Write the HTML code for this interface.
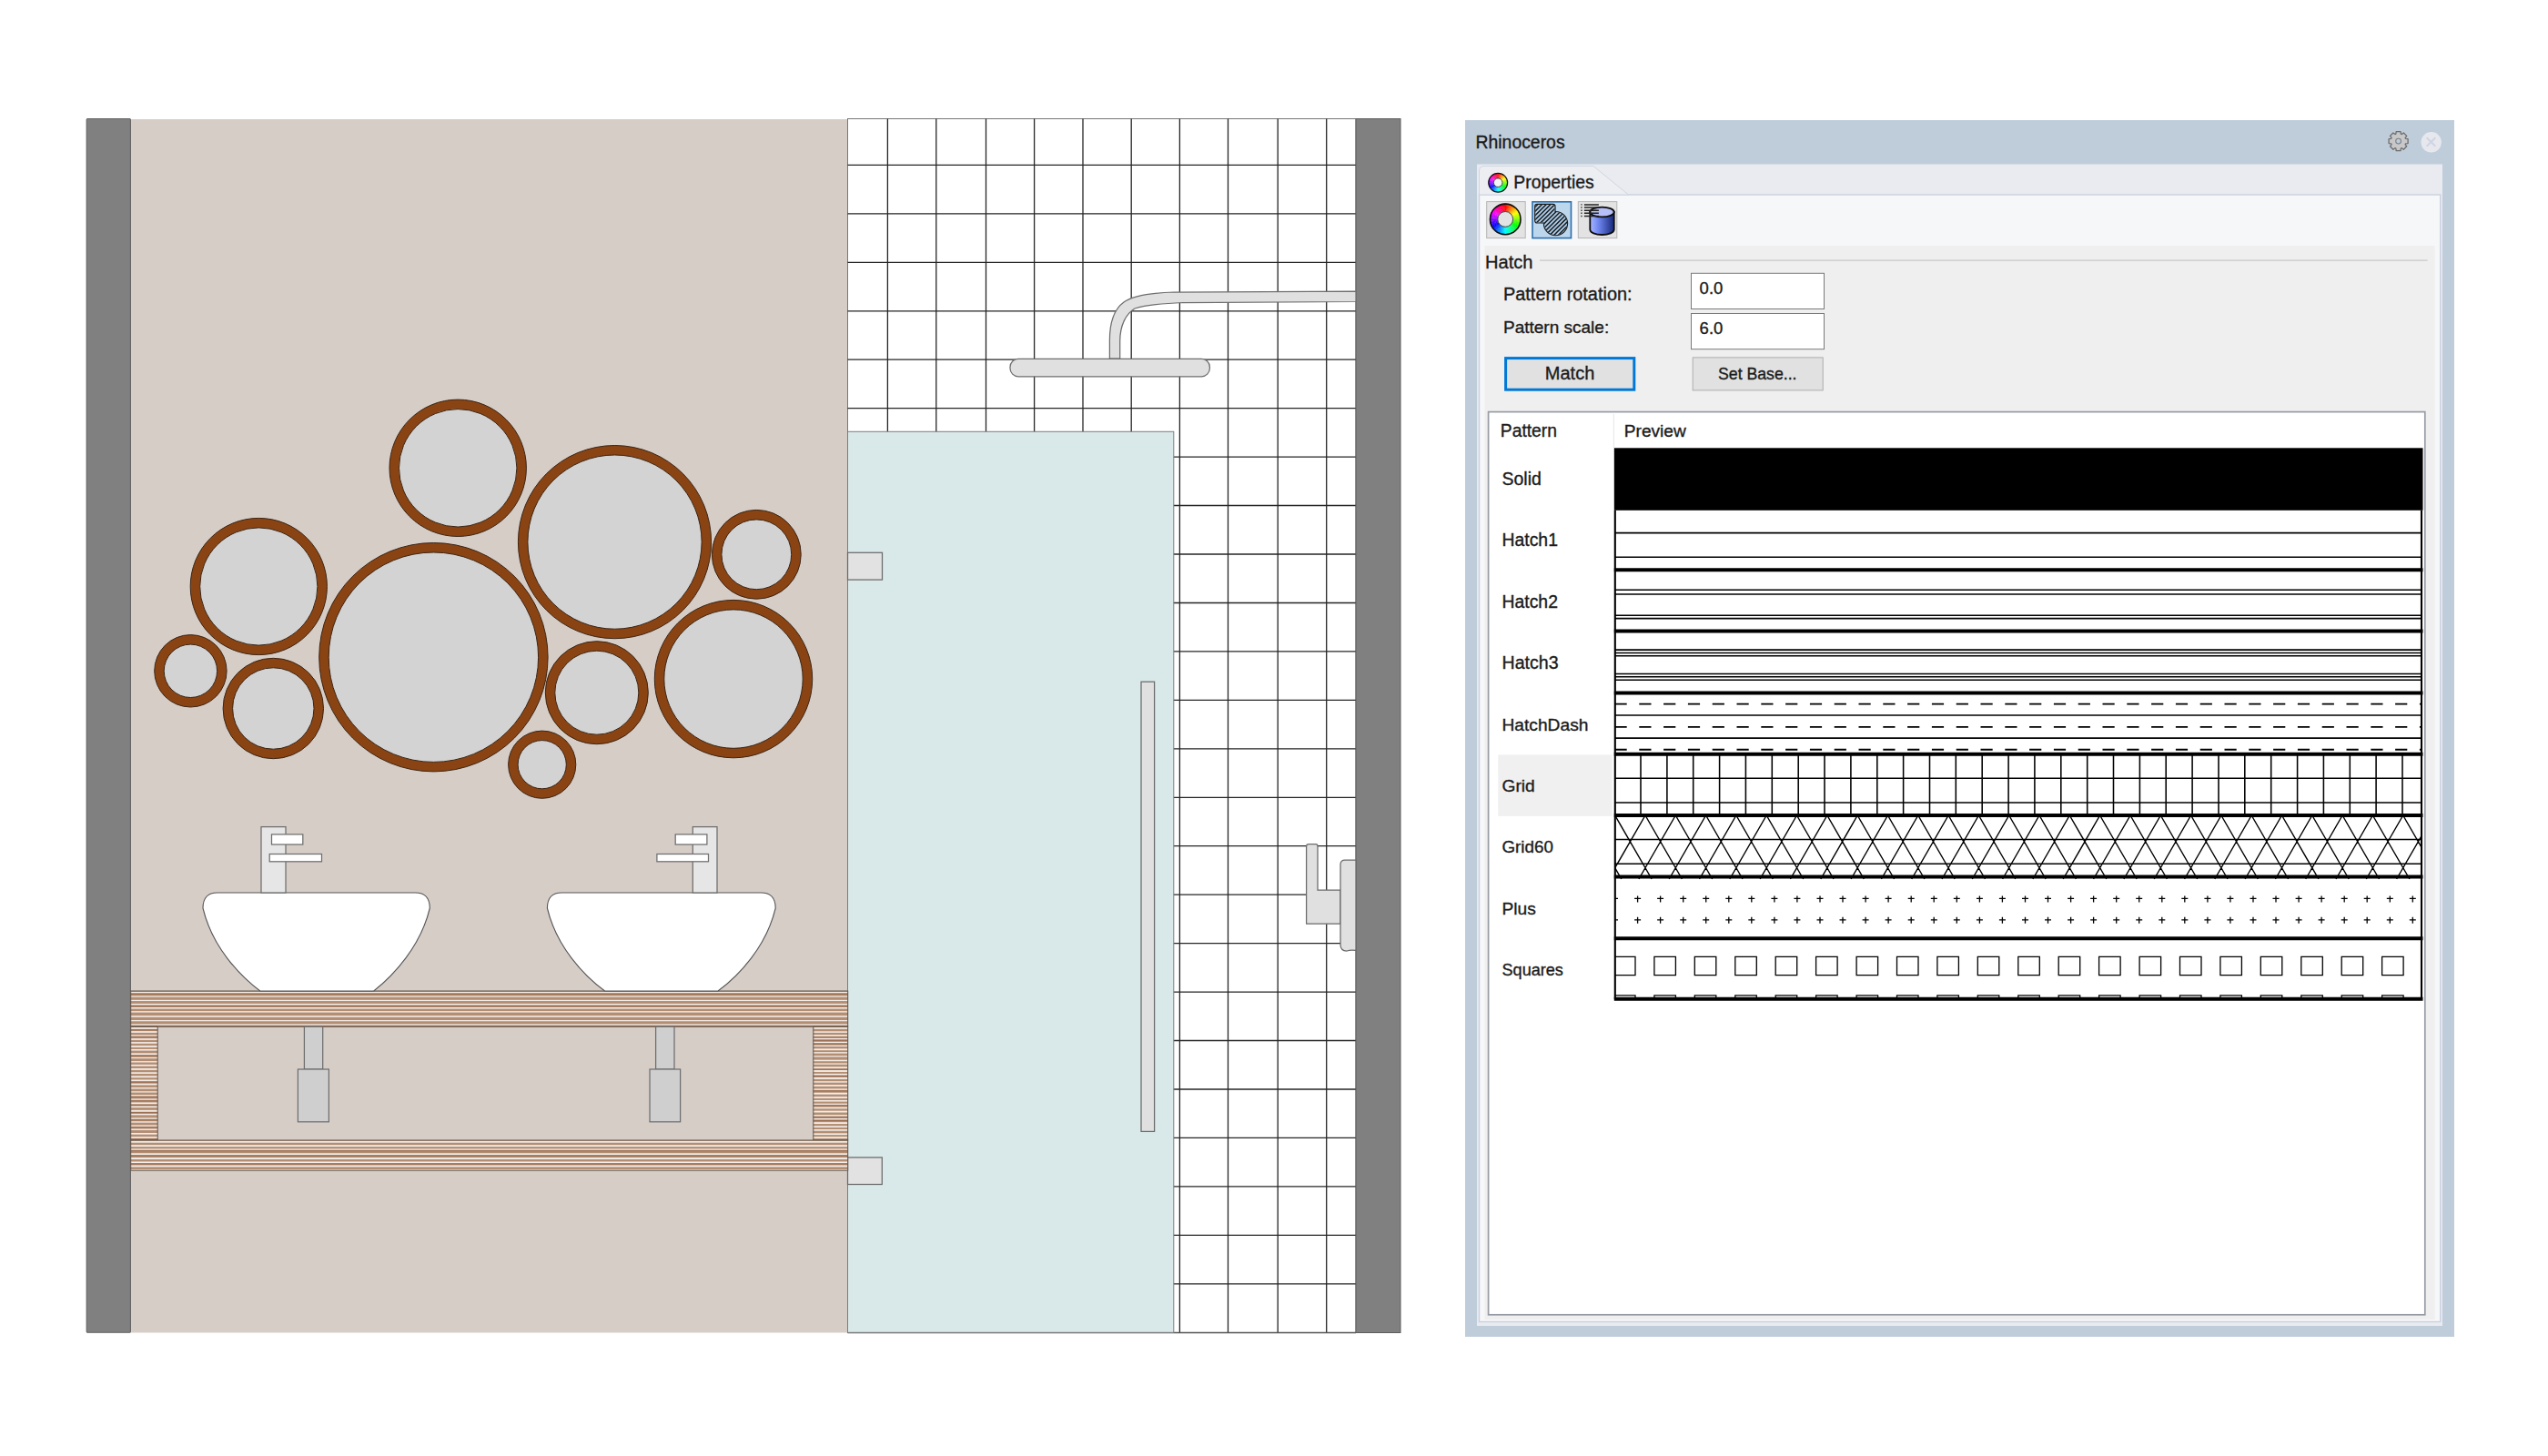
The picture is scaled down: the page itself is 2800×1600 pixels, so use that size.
<!DOCTYPE html><html><head><meta charset="utf-8"><style>html,body{margin:0;padding:0;background:#fff;width:2800px;height:1600px;overflow:hidden}svg{position:absolute;left:0;top:0}text{stroke:#1b1b1b;stroke-width:0.35px}</style></head><body>
<svg width="2800" height="1600" viewBox="0 0 2800 1600">
<defs>
<pattern id="wood" patternUnits="userSpaceOnUse" x="0" y="1089" width="40" height="4.5"><rect width="40" height="4.5" fill="#b08a6e"/><rect y="0.6" width="40" height="1.7" fill="#f1e9e3"/></pattern>
<pattern id="woodv" patternUnits="userSpaceOnUse" x="0" y="1128" width="40" height="4.2"><rect width="40" height="4.2" fill="#b08a6e"/><rect y="0.6" width="40" height="1.6" fill="#f1e9e3"/></pattern>
</defs>
<rect x="143.5" y="131" width="788" height="1333.5" fill="#d6cdc7"/>
<rect x="95.2" y="130.5" width="48.2" height="1333.8" rx="1" fill="#808080" stroke="#626262" stroke-width="1.1"/>
<rect x="931.5" y="130.5" width="558.5" height="1334" fill="#fff" stroke="#777" stroke-width="1"/>
<path d="M975.4 130.5V1464.5M1028.8 130.5V1464.5M1083.5 130.5V1464.5M1136.6 130.5V1464.5M1190 130.5V1464.5M1243.2 130.5V1464.5M1296.4 130.5V1464.5M1349.5 130.5V1464.5M1404.2 130.5V1464.5M1457.7 130.5V1464.5M931.5 181.4H1490M931.5 234.9H1490M931.5 288.3H1490M931.5 341.8H1490M931.5 395.2H1490M931.5 448.6H1490M931.5 502.1H1490M931.5 555.5H1490M931.5 609.0H1490M931.5 662.5H1490M931.5 715.9H1490M931.5 769.4H1490M931.5 822.8H1490M931.5 876.3H1490M931.5 929.7H1490M931.5 983.2H1490M931.5 1036.6H1490M931.5 1090.1H1490M931.5 1143.5H1490M931.5 1197.0H1490M931.5 1250.4H1490M931.5 1303.9H1490M931.5 1357.3H1490M931.5 1410.8H1490" stroke="#262626" stroke-width="1.3" fill="none"/>
<path d="M931.5 1464.5H1490" stroke="#555" stroke-width="1.3"/>
<rect x="1490" y="130.5" width="49" height="1334" fill="#808080" stroke="#5e5e5e" stroke-width="1"/>
<path d="M1219.4 394 L1219.4 374 C1219.4 355 1224 340 1235 332 C1245 325 1262 322 1290 321 L1490 320.2 L1490 331.5 L1300 332.5 C1275 333.5 1256 336 1247 339 C1237 345 1230.7 358 1230.7 375 L1230.7 394 Z" fill="#e0e0e0" stroke="#6e6e6e" stroke-width="1.25"/>
<rect x="1110" y="394.4" width="219.4" height="19.4" rx="9" fill="#e0e0e0" stroke="#6e6e6e" stroke-width="1.25"/>
<rect x="931.5" y="474.3" width="358.3" height="990" fill="#d9e8e8" stroke="#7c7c7c" stroke-width="1"/>
<rect x="931.5" y="607.3" width="38" height="29.8" fill="#e2e2e2" stroke="#6a6a6a" stroke-width="1.25"/>
<rect x="931.5" y="1271.9" width="37.8" height="29.6" fill="#e2e2e2" stroke="#6a6a6a" stroke-width="1.25"/>
<rect x="1254" y="749.2" width="14.6" height="494.2" fill="#e0e0e0" stroke="#6a6a6a" stroke-width="1.25"/>
<path d="M1435.6 1015.2 L1435.6 930 Q1435.6 927.7 1438 927.7 L1446 927.7 Q1448 927.7 1448 930 L1448 978 L1473 978 L1473 1015.2 Z" fill="#e0e0e0" stroke="#6a6a6a" stroke-width="1.25"/>
<path d="M1490 945 L1478 945 Q1473 945 1473 950 L1473 1038 Q1473 1045 1480 1045 Q1484 1043.5 1490 1044.4 Z" fill="#e0e0e0" stroke="#6a6a6a" stroke-width="1.25"/>
<rect x="143.7" y="1089" width="788" height="39.2" fill="#b38e73"/><rect x="143.7" y="1089.80" width="788" height="1.43" fill="#f4ede8"/><rect x="143.7" y="1091.83" width="788" height="0.9" fill="#946446"/><rect x="143.7" y="1094.44" width="788" height="1.25" fill="#f4ede8"/><rect x="143.7" y="1098.81" width="788" height="1.24" fill="#f4ede8"/><rect x="143.7" y="1102.90" width="788" height="1.50" fill="#f4ede8"/><rect x="143.7" y="1105.00" width="788" height="0.9" fill="#946446"/><rect x="143.7" y="1107.03" width="788" height="1.50" fill="#f4ede8"/><rect x="143.7" y="1111.19" width="788" height="1.36" fill="#f4ede8"/><rect x="143.7" y="1116.09" width="788" height="1.60" fill="#f4ede8"/><rect x="143.7" y="1121.02" width="788" height="1.23" fill="#f4ede8"/><rect x="143.7" y="1125.33" width="788" height="1.30" fill="#f4ede8"/><rect x="143.7" y="1127.23" width="788" height="0.9" fill="#946446"/><rect x="143.7" y="1089" width="788" height="39.2" fill="none" stroke="#5f544b" stroke-width="1"/>
<rect x="143.7" y="1128.2" width="29.5" height="124.8" fill="#b38e73"/><rect x="143.7" y="1129.00" width="29.5" height="1.77" fill="#f4ede8"/><rect x="143.7" y="1131.37" width="29.5" height="0.9" fill="#946446"/><rect x="143.7" y="1133.17" width="29.5" height="1.65" fill="#f4ede8"/><rect x="143.7" y="1137.31" width="29.5" height="1.24" fill="#f4ede8"/><rect x="143.7" y="1139.15" width="29.5" height="0.9" fill="#946446"/><rect x="143.7" y="1141.16" width="29.5" height="1.68" fill="#f4ede8"/><rect x="143.7" y="1145.11" width="29.5" height="1.61" fill="#f4ede8"/><rect x="143.7" y="1149.05" width="29.5" height="1.76" fill="#f4ede8"/><rect x="143.7" y="1152.94" width="29.5" height="1.60" fill="#f4ede8"/><rect x="143.7" y="1157.35" width="29.5" height="1.71" fill="#f4ede8"/><rect x="143.7" y="1159.66" width="29.5" height="0.9" fill="#946446"/><rect x="143.7" y="1161.84" width="29.5" height="1.28" fill="#f4ede8"/><rect x="143.7" y="1166.15" width="29.5" height="1.31" fill="#f4ede8"/><rect x="143.7" y="1169.87" width="29.5" height="1.67" fill="#f4ede8"/><rect x="143.7" y="1174.03" width="29.5" height="1.81" fill="#f4ede8"/><rect x="143.7" y="1178.29" width="29.5" height="1.62" fill="#f4ede8"/><rect x="143.7" y="1182.36" width="29.5" height="1.79" fill="#f4ede8"/><rect x="143.7" y="1186.44" width="29.5" height="1.66" fill="#f4ede8"/><rect x="143.7" y="1188.70" width="29.5" height="0.9" fill="#946446"/><rect x="143.7" y="1190.70" width="29.5" height="1.65" fill="#f4ede8"/><rect x="143.7" y="1195.06" width="29.5" height="1.40" fill="#f4ede8"/><rect x="143.7" y="1199.30" width="29.5" height="1.22" fill="#f4ede8"/><rect x="143.7" y="1203.13" width="29.5" height="1.28" fill="#f4ede8"/><rect x="143.7" y="1205.01" width="29.5" height="0.9" fill="#946446"/><rect x="143.7" y="1207.45" width="29.5" height="1.29" fill="#f4ede8"/><rect x="143.7" y="1209.34" width="29.5" height="0.9" fill="#946446"/><rect x="143.7" y="1211.46" width="29.5" height="1.81" fill="#f4ede8"/><rect x="143.7" y="1213.87" width="29.5" height="0.9" fill="#946446"/><rect x="143.7" y="1215.52" width="29.5" height="1.58" fill="#f4ede8"/><rect x="143.7" y="1219.88" width="29.5" height="1.80" fill="#f4ede8"/><rect x="143.7" y="1222.29" width="29.5" height="0.9" fill="#946446"/><rect x="143.7" y="1223.91" width="29.5" height="1.45" fill="#f4ede8"/><rect x="143.7" y="1228.39" width="29.5" height="1.31" fill="#f4ede8"/><rect x="143.7" y="1230.29" width="29.5" height="0.9" fill="#946446"/><rect x="143.7" y="1232.27" width="29.5" height="1.36" fill="#f4ede8"/><rect x="143.7" y="1236.44" width="29.5" height="1.38" fill="#f4ede8"/><rect x="143.7" y="1238.42" width="29.5" height="0.9" fill="#946446"/><rect x="143.7" y="1240.47" width="29.5" height="1.46" fill="#f4ede8"/><rect x="143.7" y="1244.95" width="29.5" height="1.68" fill="#f4ede8"/><rect x="143.7" y="1249.14" width="29.5" height="1.67" fill="#f4ede8"/><rect x="143.7" y="1251.42" width="29.5" height="0.9" fill="#946446"/><rect x="143.7" y="1128.2" width="29.5" height="124.8" fill="none" stroke="#5f544b" stroke-width="1"/>
<rect x="893.8" y="1128.2" width="37.9" height="124.8" fill="#b38e73"/><rect x="893.8" y="1129.00" width="37.9" height="1.75" fill="#f4ede8"/><rect x="893.8" y="1133.34" width="37.9" height="1.47" fill="#f4ede8"/><rect x="893.8" y="1137.12" width="37.9" height="1.64" fill="#f4ede8"/><rect x="893.8" y="1139.36" width="37.9" height="0.9" fill="#946446"/><rect x="893.8" y="1140.86" width="37.9" height="1.35" fill="#f4ede8"/><rect x="893.8" y="1142.81" width="37.9" height="0.9" fill="#946446"/><rect x="893.8" y="1144.83" width="37.9" height="1.24" fill="#f4ede8"/><rect x="893.8" y="1146.67" width="37.9" height="0.9" fill="#946446"/><rect x="893.8" y="1148.65" width="37.9" height="1.27" fill="#f4ede8"/><rect x="893.8" y="1152.36" width="37.9" height="1.81" fill="#f4ede8"/><rect x="893.8" y="1156.17" width="37.9" height="1.38" fill="#f4ede8"/><rect x="893.8" y="1160.16" width="37.9" height="1.29" fill="#f4ede8"/><rect x="893.8" y="1164.66" width="37.9" height="1.53" fill="#f4ede8"/><rect x="893.8" y="1168.42" width="37.9" height="1.27" fill="#f4ede8"/><rect x="893.8" y="1172.33" width="37.9" height="1.78" fill="#f4ede8"/><rect x="893.8" y="1174.71" width="37.9" height="0.9" fill="#946446"/><rect x="893.8" y="1176.04" width="37.9" height="1.87" fill="#f4ede8"/><rect x="893.8" y="1179.85" width="37.9" height="1.58" fill="#f4ede8"/><rect x="893.8" y="1182.03" width="37.9" height="0.9" fill="#946446"/><rect x="893.8" y="1183.97" width="37.9" height="1.88" fill="#f4ede8"/><rect x="893.8" y="1188.23" width="37.9" height="1.38" fill="#f4ede8"/><rect x="893.8" y="1192.06" width="37.9" height="1.74" fill="#f4ede8"/><rect x="893.8" y="1196.39" width="37.9" height="1.43" fill="#f4ede8"/><rect x="893.8" y="1198.42" width="37.9" height="0.9" fill="#946446"/><rect x="893.8" y="1200.74" width="37.9" height="1.89" fill="#f4ede8"/><rect x="893.8" y="1205.10" width="37.9" height="1.77" fill="#f4ede8"/><rect x="893.8" y="1208.97" width="37.9" height="1.56" fill="#f4ede8"/><rect x="893.8" y="1212.69" width="37.9" height="1.22" fill="#f4ede8"/><rect x="893.8" y="1214.51" width="37.9" height="0.9" fill="#946446"/><rect x="893.8" y="1216.59" width="37.9" height="1.68" fill="#f4ede8"/><rect x="893.8" y="1220.64" width="37.9" height="1.86" fill="#f4ede8"/><rect x="893.8" y="1225.12" width="37.9" height="1.46" fill="#f4ede8"/><rect x="893.8" y="1227.17" width="37.9" height="0.9" fill="#946446"/><rect x="893.8" y="1228.99" width="37.9" height="1.34" fill="#f4ede8"/><rect x="893.8" y="1230.93" width="37.9" height="0.9" fill="#946446"/><rect x="893.8" y="1233.20" width="37.9" height="1.83" fill="#f4ede8"/><rect x="893.8" y="1237.28" width="37.9" height="1.66" fill="#f4ede8"/><rect x="893.8" y="1241.04" width="37.9" height="1.66" fill="#f4ede8"/><rect x="893.8" y="1245.37" width="37.9" height="1.73" fill="#f4ede8"/><rect x="893.8" y="1249.21" width="37.9" height="1.75" fill="#f4ede8"/><rect x="893.8" y="1128.2" width="37.9" height="124.8" fill="none" stroke="#5f544b" stroke-width="1"/>
<rect x="143.7" y="1253" width="788" height="33.2" fill="#b38e73"/><rect x="143.7" y="1253.80" width="788" height="1.88" fill="#f4ede8"/><rect x="143.7" y="1258.21" width="788" height="1.86" fill="#f4ede8"/><rect x="143.7" y="1262.41" width="788" height="1.29" fill="#f4ede8"/><rect x="143.7" y="1264.30" width="788" height="0.9" fill="#946446"/><rect x="143.7" y="1267.28" width="788" height="1.76" fill="#f4ede8"/><rect x="143.7" y="1269.64" width="788" height="0.9" fill="#946446"/><rect x="143.7" y="1272.07" width="788" height="1.89" fill="#f4ede8"/><rect x="143.7" y="1276.44" width="788" height="1.58" fill="#f4ede8"/><rect x="143.7" y="1278.62" width="788" height="0.9" fill="#946446"/><rect x="143.7" y="1280.50" width="788" height="1.88" fill="#f4ede8"/><rect x="143.7" y="1285.02" width="788" height="1.18" fill="#f4ede8"/><rect x="143.7" y="1253" width="788" height="33.2" fill="none" stroke="#5f544b" stroke-width="1"/>
<path d="M239 981 L456.3 981 Q472.3 981 472.3 998 C462.3 1040 432.3 1072 410.7 1089 L285.8 1089 C263 1072 233 1040 223 998 Q223 981 239 981 Z" fill="#fff" stroke="#555" stroke-width="1.1"/>
<path d="M617.4 981 L836.2 981 Q852.2 981 852.2 998 C842.2 1040 812.2 1072 789 1089 L664.6 1089 C641.4 1072 611.4 1040 601.4 998 Q601.4 981 617.4 981 Z" fill="#fff" stroke="#555" stroke-width="1.1"/>
<rect x="287" y="908.6" width="27" height="72.4" fill="#e6e6e6" stroke="#6e6e6e" stroke-width="1.25"/><rect x="298.5" y="916.9" width="34.30000000000001" height="11.1" fill="#ffffff" stroke="#6e6e6e" stroke-width="1.25"/><rect x="296.2" y="938.5" width="57.30000000000001" height="8.3" fill="#ffffff" stroke="#6e6e6e" stroke-width="1.25"/>
<rect x="761.3" y="908.6" width="26.700000000000045" height="72.4" fill="#e6e6e6" stroke="#6e6e6e" stroke-width="1.25"/><rect x="742.2" y="916.9" width="34.69999999999993" height="11.1" fill="#ffffff" stroke="#6e6e6e" stroke-width="1.25"/><rect x="721.9" y="938.5" width="56.60000000000002" height="8.3" fill="#ffffff" stroke="#6e6e6e" stroke-width="1.25"/>
<rect x="334.4" y="1128.2" width="20.30000000000001" height="46.8" fill="#cfcfcf" stroke="#6e6e6e" stroke-width="1.25"/><rect x="327.4" y="1175" width="34.0" height="57.8" fill="#cfcfcf" stroke="#6e6e6e" stroke-width="1.25"/>
<rect x="720.6" y="1128.2" width="20.399999999999977" height="46.8" fill="#cfcfcf" stroke="#6e6e6e" stroke-width="1.25"/><rect x="714" y="1175" width="33.60000000000002" height="57.8" fill="#cfcfcf" stroke="#6e6e6e" stroke-width="1.25"/>
<circle cx="503.2" cy="514.3" r="75.2" fill="#8a4413" stroke="#3a2414" stroke-width="1"/>
<circle cx="503.2" cy="514.3" r="64.7" fill="#d3d3d3" stroke="#3a2414" stroke-width="1"/>
<circle cx="675.5" cy="595.6" r="106.1" fill="#8a4413" stroke="#3a2414" stroke-width="1"/>
<circle cx="675.5" cy="595.6" r="95.6" fill="#d3d3d3" stroke="#3a2414" stroke-width="1"/>
<circle cx="831.3" cy="609.3" r="48.9" fill="#8a4413" stroke="#3a2414" stroke-width="1"/>
<circle cx="831.3" cy="609.3" r="38.4" fill="#d3d3d3" stroke="#3a2414" stroke-width="1"/>
<circle cx="284.3" cy="644.5" r="75.1" fill="#8a4413" stroke="#3a2414" stroke-width="1"/>
<circle cx="284.3" cy="644.5" r="64.6" fill="#d3d3d3" stroke="#3a2414" stroke-width="1"/>
<circle cx="476.4" cy="722.2" r="125.7" fill="#8a4413" stroke="#3a2414" stroke-width="1"/>
<circle cx="476.4" cy="722.2" r="115.2" fill="#d3d3d3" stroke="#3a2414" stroke-width="1"/>
<circle cx="209.4" cy="737.3" r="39.7" fill="#8a4413" stroke="#3a2414" stroke-width="1"/>
<circle cx="209.4" cy="737.3" r="29.200000000000003" fill="#d3d3d3" stroke="#3a2414" stroke-width="1"/>
<circle cx="300.3" cy="778.5" r="55.2" fill="#8a4413" stroke="#3a2414" stroke-width="1"/>
<circle cx="300.3" cy="778.5" r="44.7" fill="#d3d3d3" stroke="#3a2414" stroke-width="1"/>
<circle cx="655.8" cy="761.2" r="56.5" fill="#8a4413" stroke="#3a2414" stroke-width="1"/>
<circle cx="655.8" cy="761.2" r="46" fill="#d3d3d3" stroke="#3a2414" stroke-width="1"/>
<circle cx="806" cy="746.1" r="86.7" fill="#8a4413" stroke="#3a2414" stroke-width="1"/>
<circle cx="806" cy="746.1" r="76.2" fill="#d3d3d3" stroke="#3a2414" stroke-width="1"/>
<circle cx="595.7" cy="840.2" r="37.1" fill="#8a4413" stroke="#3a2414" stroke-width="1"/>
<circle cx="595.7" cy="840.2" r="26.6" fill="#d3d3d3" stroke="#3a2414" stroke-width="1"/>
<rect x="1610" y="132" width="1087" height="1337" fill="#bfcddb"/>
<text x="1621.5" y="162.6" font-family='"Liberation Sans", sans-serif' font-size="19.4" fill="#1b1b1b">Rhinoceros</text>
<g transform="translate(2635.6 155.1)">
<path d="M-2.73 -7.94 L-2.43 -10.52 L2.43 -10.52 L2.73 -7.94 L3.68 -7.55 L5.72 -9.16 L9.16 -5.72 L7.55 -3.68 L7.94 -2.73 L10.52 -2.43 L10.52 2.43 L7.94 2.73 L7.55 3.68 L9.16 5.72 L5.72 9.16 L3.68 7.55 L2.73 7.94 L2.43 10.52 L-2.43 10.52 L-2.73 7.94 L-3.68 7.55 L-5.72 9.16 L-9.16 5.72 L-7.55 3.68 L-7.94 2.73 L-10.52 2.43 L-10.52 -2.43 L-7.94 -2.73 L-7.55 -3.68 L-9.16 -5.72 L-5.72 -9.16 L-3.68 -7.55 Z" fill="#c8c8c8" stroke="#6e6e6e" stroke-width="1.3" stroke-linejoin="round"/>
<circle r="2.9" fill="#bfcddb" stroke="#7a8088" stroke-width="1.1"/>
</g>
<circle cx="2671.7" cy="156.3" r="11.2" fill="#e6e8ee"/>
<path d="M2666.7 151.2 L2676.3 160.8 M2676.3 151.2 L2666.7 160.8" stroke="#d0d3e3" stroke-width="2"/>
<rect x="1623" y="180.5" width="1061" height="1276.5" fill="#e9ebf0"/>
<rect x="1625.5" y="214" width="1056.2" height="1238.5" fill="#f6f7f9" stroke="#c9d0df" stroke-width="1.4"/>
<path d="M1625.5 214 L1625.5 188 Q1625.5 182.5 1631 182.5 L1751 182.5 L1789.5 214 Z" fill="#eceef2" stroke="#cfd5e2" stroke-width="1"/>
<rect x="1631.5" y="270" width="1044.3" height="1180" fill="#efefef"/>
<defs><radialGradient id="rg"/></defs>
<path d="M1646.09 190.20A10.5 10.5 0 0 1 1647.04 190.23L1646.58 195.92A4.8 4.8 0 0 0 1646.15 195.90Z" fill="#ff0800"/><path d="M1646.82 190.22A10.5 10.5 0 0 1 1647.77 190.32L1646.92 195.95A4.8 4.8 0 0 0 1646.48 195.91Z" fill="#ff1900"/><path d="M1647.55 190.29A10.5 10.5 0 0 1 1648.49 190.45L1647.25 196.02A4.8 4.8 0 0 0 1646.82 195.94Z" fill="#ff2a00"/><path d="M1648.28 190.41A10.5 10.5 0 0 1 1649.20 190.64L1647.57 196.10A4.8 4.8 0 0 0 1647.15 195.99Z" fill="#ff3b00"/><path d="M1648.99 190.58A10.5 10.5 0 0 1 1649.89 190.87L1647.89 196.21A4.8 4.8 0 0 0 1647.47 196.07Z" fill="#ff4c00"/><path d="M1649.69 190.80A10.5 10.5 0 0 1 1650.57 191.15L1648.20 196.34A4.8 4.8 0 0 0 1647.79 196.17Z" fill="#ff5d00"/><path d="M1650.37 191.06A10.5 10.5 0 0 1 1651.23 191.48L1648.50 196.49A4.8 4.8 0 0 0 1648.11 196.29Z" fill="#ff6e00"/><path d="M1651.03 191.38A10.5 10.5 0 0 1 1651.86 191.85L1648.79 196.66A4.8 4.8 0 0 0 1648.41 196.44Z" fill="#ff7f00"/><path d="M1651.67 191.74A10.5 10.5 0 0 1 1652.46 192.27L1649.06 196.85A4.8 4.8 0 0 0 1648.70 196.60Z" fill="#ff9000"/><path d="M1652.28 192.14A10.5 10.5 0 0 1 1653.03 192.73L1649.32 197.06A4.8 4.8 0 0 0 1648.98 196.79Z" fill="#ffa100"/><path d="M1652.86 192.59A10.5 10.5 0 0 1 1653.57 193.22L1649.57 197.28A4.8 4.8 0 0 0 1649.25 196.99Z" fill="#ffb200"/><path d="M1653.41 193.07A10.5 10.5 0 0 1 1654.08 193.76L1649.80 197.53A4.8 4.8 0 0 0 1649.50 197.21Z" fill="#ffc300"/><path d="M1653.93 193.59A10.5 10.5 0 0 1 1654.54 194.32L1650.01 197.78A4.8 4.8 0 0 0 1649.73 197.45Z" fill="#ffd400"/><path d="M1654.41 194.15A10.5 10.5 0 0 1 1654.97 194.92L1650.21 198.06A4.8 4.8 0 0 0 1649.95 197.71Z" fill="#ffe500"/><path d="M1654.84 194.74A10.5 10.5 0 0 1 1655.35 195.55L1650.38 198.34A4.8 4.8 0 0 0 1650.15 197.97Z" fill="#fff600"/><path d="M1655.24 195.36A10.5 10.5 0 0 1 1655.69 196.20L1650.54 198.64A4.8 4.8 0 0 0 1650.33 198.26Z" fill="#f6ff00"/><path d="M1655.59 196.00A10.5 10.5 0 0 1 1655.98 196.87L1650.67 198.95A4.8 4.8 0 0 0 1650.49 198.55Z" fill="#e5ff00"/><path d="M1655.89 196.66A10.5 10.5 0 0 1 1656.22 197.56L1650.78 199.26A4.8 4.8 0 0 0 1650.63 198.86Z" fill="#d4ff00"/><path d="M1656.15 197.35A10.5 10.5 0 0 1 1656.41 198.27L1650.87 199.59A4.8 4.8 0 0 0 1650.75 199.17Z" fill="#c3ff00"/><path d="M1656.36 198.05A10.5 10.5 0 0 1 1656.56 198.99L1650.94 199.92A4.8 4.8 0 0 0 1650.85 199.49Z" fill="#b2ff00"/><path d="M1656.52 198.77A10.5 10.5 0 0 1 1656.65 199.71L1650.98 200.25A4.8 4.8 0 0 0 1650.92 199.82Z" fill="#a1ff00"/><path d="M1656.63 199.49A10.5 10.5 0 0 1 1656.70 200.44L1651.00 200.58A4.8 4.8 0 0 0 1650.97 200.15Z" fill="#90ff00"/><path d="M1656.69 200.22A10.5 10.5 0 0 1 1656.69 201.18L1651.00 200.92A4.8 4.8 0 0 0 1651.00 200.48Z" fill="#7fff00"/><path d="M1656.70 200.96A10.5 10.5 0 0 1 1656.63 201.91L1650.97 201.25A4.8 4.8 0 0 0 1651.00 200.82Z" fill="#6eff00"/><path d="M1656.65 201.69A10.5 10.5 0 0 1 1656.52 202.63L1650.92 201.58A4.8 4.8 0 0 0 1650.98 201.15Z" fill="#5dff00"/><path d="M1656.56 202.41A10.5 10.5 0 0 1 1656.36 203.35L1650.85 201.91A4.8 4.8 0 0 0 1650.94 201.48Z" fill="#4cff00"/><path d="M1656.41 203.13A10.5 10.5 0 0 1 1656.15 204.05L1650.75 202.23A4.8 4.8 0 0 0 1650.87 201.81Z" fill="#3bff00"/><path d="M1656.22 203.84A10.5 10.5 0 0 1 1655.89 204.74L1650.63 202.54A4.8 4.8 0 0 0 1650.78 202.14Z" fill="#2aff00"/><path d="M1655.98 204.53A10.5 10.5 0 0 1 1655.59 205.40L1650.49 202.85A4.8 4.8 0 0 0 1650.67 202.45Z" fill="#19ff00"/><path d="M1655.69 205.20A10.5 10.5 0 0 1 1655.24 206.04L1650.33 203.14A4.8 4.8 0 0 0 1650.54 202.76Z" fill="#08ff00"/><path d="M1655.35 205.85A10.5 10.5 0 0 1 1654.84 206.66L1650.15 203.43A4.8 4.8 0 0 0 1650.38 203.06Z" fill="#00ff08"/><path d="M1654.97 206.48A10.5 10.5 0 0 1 1654.41 207.25L1649.95 203.69A4.8 4.8 0 0 0 1650.21 203.34Z" fill="#00ff19"/><path d="M1654.54 207.08A10.5 10.5 0 0 1 1653.93 207.81L1649.73 203.95A4.8 4.8 0 0 0 1650.01 203.62Z" fill="#00ff2a"/><path d="M1654.08 207.64A10.5 10.5 0 0 1 1653.41 208.33L1649.50 204.19A4.8 4.8 0 0 0 1649.80 203.87Z" fill="#00ff3b"/><path d="M1653.57 208.18A10.5 10.5 0 0 1 1652.86 208.81L1649.25 204.41A4.8 4.8 0 0 0 1649.57 204.12Z" fill="#00ff4c"/><path d="M1653.03 208.67A10.5 10.5 0 0 1 1652.28 209.26L1648.98 204.61A4.8 4.8 0 0 0 1649.32 204.34Z" fill="#00ff5d"/><path d="M1652.46 209.13A10.5 10.5 0 0 1 1651.67 209.66L1648.70 204.80A4.8 4.8 0 0 0 1649.06 204.55Z" fill="#00ff6e"/><path d="M1651.86 209.55A10.5 10.5 0 0 1 1651.03 210.02L1648.41 204.96A4.8 4.8 0 0 0 1648.79 204.74Z" fill="#00ff7f"/><path d="M1651.23 209.92A10.5 10.5 0 0 1 1650.37 210.34L1648.11 205.11A4.8 4.8 0 0 0 1648.50 204.91Z" fill="#00ff90"/><path d="M1650.57 210.25A10.5 10.5 0 0 1 1649.69 210.60L1647.79 205.23A4.8 4.8 0 0 0 1648.20 205.06Z" fill="#00ffa1"/><path d="M1649.89 210.53A10.5 10.5 0 0 1 1648.99 210.82L1647.47 205.33A4.8 4.8 0 0 0 1647.89 205.19Z" fill="#00ffb2"/><path d="M1649.20 210.76A10.5 10.5 0 0 1 1648.28 210.99L1647.15 205.41A4.8 4.8 0 0 0 1647.57 205.30Z" fill="#00ffc3"/><path d="M1648.49 210.95A10.5 10.5 0 0 1 1647.55 211.11L1646.82 205.46A4.8 4.8 0 0 0 1647.25 205.38Z" fill="#00ffd4"/><path d="M1647.77 211.08A10.5 10.5 0 0 1 1646.82 211.18L1646.48 205.49A4.8 4.8 0 0 0 1646.92 205.45Z" fill="#00ffe5"/><path d="M1647.04 211.17A10.5 10.5 0 0 1 1646.09 211.20L1646.15 205.50A4.8 4.8 0 0 0 1646.58 205.48Z" fill="#00fff6"/><path d="M1646.31 211.20A10.5 10.5 0 0 1 1645.36 211.17L1645.82 205.48A4.8 4.8 0 0 0 1646.25 205.50Z" fill="#00f6ff"/><path d="M1645.58 211.18A10.5 10.5 0 0 1 1644.63 211.08L1645.48 205.45A4.8 4.8 0 0 0 1645.92 205.49Z" fill="#00e5ff"/><path d="M1644.85 211.11A10.5 10.5 0 0 1 1643.91 210.95L1645.15 205.38A4.8 4.8 0 0 0 1645.58 205.46Z" fill="#00d4ff"/><path d="M1644.12 210.99A10.5 10.5 0 0 1 1643.20 210.76L1644.83 205.30A4.8 4.8 0 0 0 1645.25 205.41Z" fill="#00c3ff"/><path d="M1643.41 210.82A10.5 10.5 0 0 1 1642.51 210.53L1644.51 205.19A4.8 4.8 0 0 0 1644.93 205.33Z" fill="#00b2ff"/><path d="M1642.71 210.60A10.5 10.5 0 0 1 1641.83 210.25L1644.20 205.06A4.8 4.8 0 0 0 1644.61 205.23Z" fill="#00a1ff"/><path d="M1642.03 210.34A10.5 10.5 0 0 1 1641.17 209.92L1643.90 204.91A4.8 4.8 0 0 0 1644.29 205.11Z" fill="#0090ff"/><path d="M1641.37 210.02A10.5 10.5 0 0 1 1640.54 209.55L1643.61 204.74A4.8 4.8 0 0 0 1643.99 204.96Z" fill="#007fff"/><path d="M1640.73 209.66A10.5 10.5 0 0 1 1639.94 209.13L1643.34 204.55A4.8 4.8 0 0 0 1643.70 204.80Z" fill="#006eff"/><path d="M1640.12 209.26A10.5 10.5 0 0 1 1639.37 208.67L1643.08 204.34A4.8 4.8 0 0 0 1643.42 204.61Z" fill="#005dff"/><path d="M1639.54 208.81A10.5 10.5 0 0 1 1638.83 208.18L1642.83 204.12A4.8 4.8 0 0 0 1643.15 204.41Z" fill="#004cff"/><path d="M1638.99 208.33A10.5 10.5 0 0 1 1638.32 207.64L1642.60 203.87A4.8 4.8 0 0 0 1642.90 204.19Z" fill="#003bff"/><path d="M1638.47 207.81A10.5 10.5 0 0 1 1637.86 207.08L1642.39 203.62A4.8 4.8 0 0 0 1642.67 203.95Z" fill="#002aff"/><path d="M1637.99 207.25A10.5 10.5 0 0 1 1637.43 206.48L1642.19 203.34A4.8 4.8 0 0 0 1642.45 203.69Z" fill="#0019ff"/><path d="M1637.56 206.66A10.5 10.5 0 0 1 1637.05 205.85L1642.02 203.06A4.8 4.8 0 0 0 1642.25 203.43Z" fill="#0008ff"/><path d="M1637.16 206.04A10.5 10.5 0 0 1 1636.71 205.20L1641.86 202.76A4.8 4.8 0 0 0 1642.07 203.14Z" fill="#0800ff"/><path d="M1636.81 205.40A10.5 10.5 0 0 1 1636.42 204.53L1641.73 202.45A4.8 4.8 0 0 0 1641.91 202.85Z" fill="#1900ff"/><path d="M1636.51 204.74A10.5 10.5 0 0 1 1636.18 203.84L1641.62 202.14A4.8 4.8 0 0 0 1641.77 202.54Z" fill="#2a00ff"/><path d="M1636.25 204.05A10.5 10.5 0 0 1 1635.99 203.13L1641.53 201.81A4.8 4.8 0 0 0 1641.65 202.23Z" fill="#3b00ff"/><path d="M1636.04 203.35A10.5 10.5 0 0 1 1635.84 202.41L1641.46 201.48A4.8 4.8 0 0 0 1641.55 201.91Z" fill="#4c00ff"/><path d="M1635.88 202.63A10.5 10.5 0 0 1 1635.75 201.69L1641.42 201.15A4.8 4.8 0 0 0 1641.48 201.58Z" fill="#5d00ff"/><path d="M1635.77 201.91A10.5 10.5 0 0 1 1635.70 200.96L1641.40 200.82A4.8 4.8 0 0 0 1641.43 201.25Z" fill="#6e00ff"/><path d="M1635.71 201.18A10.5 10.5 0 0 1 1635.71 200.22L1641.40 200.48A4.8 4.8 0 0 0 1641.40 200.92Z" fill="#7f00ff"/><path d="M1635.70 200.44A10.5 10.5 0 0 1 1635.77 199.49L1641.43 200.15A4.8 4.8 0 0 0 1641.40 200.58Z" fill="#9000ff"/><path d="M1635.75 199.71A10.5 10.5 0 0 1 1635.88 198.77L1641.48 199.82A4.8 4.8 0 0 0 1641.42 200.25Z" fill="#a100ff"/><path d="M1635.84 198.99A10.5 10.5 0 0 1 1636.04 198.05L1641.55 199.49A4.8 4.8 0 0 0 1641.46 199.92Z" fill="#b200ff"/><path d="M1635.99 198.27A10.5 10.5 0 0 1 1636.25 197.35L1641.65 199.17A4.8 4.8 0 0 0 1641.53 199.59Z" fill="#c300ff"/><path d="M1636.18 197.56A10.5 10.5 0 0 1 1636.51 196.66L1641.77 198.86A4.8 4.8 0 0 0 1641.62 199.26Z" fill="#d400ff"/><path d="M1636.42 196.87A10.5 10.5 0 0 1 1636.81 196.00L1641.91 198.55A4.8 4.8 0 0 0 1641.73 198.95Z" fill="#e500ff"/><path d="M1636.71 196.20A10.5 10.5 0 0 1 1637.16 195.36L1642.07 198.26A4.8 4.8 0 0 0 1641.86 198.64Z" fill="#f600ff"/><path d="M1637.05 195.55A10.5 10.5 0 0 1 1637.56 194.74L1642.25 197.97A4.8 4.8 0 0 0 1642.02 198.34Z" fill="#ff00f6"/><path d="M1637.43 194.92A10.5 10.5 0 0 1 1637.99 194.15L1642.45 197.71A4.8 4.8 0 0 0 1642.19 198.06Z" fill="#ff00e5"/><path d="M1637.86 194.32A10.5 10.5 0 0 1 1638.47 193.59L1642.67 197.45A4.8 4.8 0 0 0 1642.39 197.78Z" fill="#ff00d4"/><path d="M1638.32 193.76A10.5 10.5 0 0 1 1638.99 193.07L1642.90 197.21A4.8 4.8 0 0 0 1642.60 197.53Z" fill="#ff00c3"/><path d="M1638.83 193.22A10.5 10.5 0 0 1 1639.54 192.59L1643.15 196.99A4.8 4.8 0 0 0 1642.83 197.28Z" fill="#ff00b2"/><path d="M1639.37 192.73A10.5 10.5 0 0 1 1640.12 192.14L1643.42 196.79A4.8 4.8 0 0 0 1643.08 197.06Z" fill="#ff00a1"/><path d="M1639.94 192.27A10.5 10.5 0 0 1 1640.73 191.74L1643.70 196.60A4.8 4.8 0 0 0 1643.34 196.85Z" fill="#ff0090"/><path d="M1640.54 191.85A10.5 10.5 0 0 1 1641.37 191.38L1643.99 196.44A4.8 4.8 0 0 0 1643.61 196.66Z" fill="#ff007f"/><path d="M1641.17 191.48A10.5 10.5 0 0 1 1642.03 191.06L1644.29 196.29A4.8 4.8 0 0 0 1643.90 196.49Z" fill="#ff006e"/><path d="M1641.83 191.15A10.5 10.5 0 0 1 1642.71 190.80L1644.61 196.17A4.8 4.8 0 0 0 1644.20 196.34Z" fill="#ff005d"/><path d="M1642.51 190.87A10.5 10.5 0 0 1 1643.41 190.58L1644.93 196.07A4.8 4.8 0 0 0 1644.51 196.21Z" fill="#ff004c"/><path d="M1643.20 190.64A10.5 10.5 0 0 1 1644.12 190.41L1645.25 195.99A4.8 4.8 0 0 0 1644.83 196.10Z" fill="#ff003b"/><path d="M1643.91 190.45A10.5 10.5 0 0 1 1644.85 190.29L1645.58 195.94A4.8 4.8 0 0 0 1645.15 196.02Z" fill="#ff002a"/><path d="M1644.63 190.32A10.5 10.5 0 0 1 1645.58 190.22L1645.92 195.91A4.8 4.8 0 0 0 1645.48 195.95Z" fill="#ff0019"/><path d="M1645.36 190.23A10.5 10.5 0 0 1 1646.31 190.20L1646.25 195.90A4.8 4.8 0 0 0 1645.82 195.92Z" fill="#ff0008"/><circle cx="1646.2" cy="200.7" r="4.8" fill="#f3f4f6" stroke="#333" stroke-width="0.9"/><circle cx="1646.2" cy="200.7" r="10.4" fill="none" stroke="#111" stroke-width="1.2"/>
<text x="1663.3" y="206.5" font-family='"Liberation Sans", sans-serif' font-size="19.4" fill="#1b1b1b">Properties</text>
<rect x="1633.7" y="221.6" width="42.5" height="40" fill="#e3e3e3" stroke="#b4b4b4" stroke-width="1"/>
<rect x="1684" y="221.8" width="42.5" height="39.8" fill="#bcd6ec" stroke="#2c6ead" stroke-width="1.6"/>
<rect x="1734.3" y="221.6" width="42.5" height="40" fill="#e3e3e3" stroke="#b4b4b4" stroke-width="1"/>
<path d="M1654.02 223.80A17.1 17.1 0 0 1 1655.57 223.86L1654.87 232.53A8.4 8.4 0 0 0 1654.11 232.50Z" fill="#ff0800"/><path d="M1655.21 223.83A17.1 17.1 0 0 1 1656.76 223.99L1655.46 232.59A8.4 8.4 0 0 0 1654.70 232.51Z" fill="#ff1900"/><path d="M1656.40 223.94A17.1 17.1 0 0 1 1657.93 224.21L1656.03 232.70A8.4 8.4 0 0 0 1655.28 232.57Z" fill="#ff2a00"/><path d="M1657.58 224.14A17.1 17.1 0 0 1 1659.09 224.51L1656.60 232.85A8.4 8.4 0 0 0 1655.86 232.67Z" fill="#ff3b00"/><path d="M1658.74 224.41A17.1 17.1 0 0 1 1660.22 224.89L1657.16 233.04A8.4 8.4 0 0 0 1656.43 232.80Z" fill="#ff4c00"/><path d="M1659.88 224.77A17.1 17.1 0 0 1 1661.32 225.35L1657.70 233.26A8.4 8.4 0 0 0 1656.99 232.98Z" fill="#ff5d00"/><path d="M1660.99 225.21A17.1 17.1 0 0 1 1662.39 225.89L1658.22 233.52A8.4 8.4 0 0 0 1657.54 233.19Z" fill="#ff6e00"/><path d="M1662.07 225.72A17.1 17.1 0 0 1 1663.41 226.49L1658.73 233.82A8.4 8.4 0 0 0 1658.07 233.44Z" fill="#ff7f00"/><path d="M1663.11 226.30A17.1 17.1 0 0 1 1664.40 227.17L1659.21 234.16A8.4 8.4 0 0 0 1658.58 233.73Z" fill="#ff9000"/><path d="M1664.11 226.96A17.1 17.1 0 0 1 1665.33 227.92L1659.67 234.52A8.4 8.4 0 0 0 1659.07 234.05Z" fill="#ffa100"/><path d="M1665.05 227.69A17.1 17.1 0 0 1 1666.21 228.72L1660.10 234.92A8.4 8.4 0 0 0 1659.53 234.41Z" fill="#ffb200"/><path d="M1665.95 228.48A17.1 17.1 0 0 1 1667.03 229.59L1660.50 235.34A8.4 8.4 0 0 0 1659.97 234.80Z" fill="#ffc300"/><path d="M1666.79 229.33A17.1 17.1 0 0 1 1667.78 230.51L1660.87 235.80A8.4 8.4 0 0 0 1660.38 235.21Z" fill="#ffd400"/><path d="M1667.56 230.23A17.1 17.1 0 0 1 1668.48 231.49L1661.21 236.28A8.4 8.4 0 0 0 1660.76 235.66Z" fill="#ffe500"/><path d="M1668.28 231.19A17.1 17.1 0 0 1 1669.10 232.51L1661.52 236.78A8.4 8.4 0 0 0 1661.11 236.13Z" fill="#fff600"/><path d="M1668.92 232.20A17.1 17.1 0 0 1 1669.65 233.57L1661.79 237.30A8.4 8.4 0 0 0 1661.43 236.62Z" fill="#f6ff00"/><path d="M1669.49 233.24A17.1 17.1 0 0 1 1670.12 234.66L1662.02 237.84A8.4 8.4 0 0 0 1661.71 237.14Z" fill="#e5ff00"/><path d="M1669.99 234.33A17.1 17.1 0 0 1 1670.52 235.79L1662.22 238.39A8.4 8.4 0 0 0 1661.95 237.67Z" fill="#d4ff00"/><path d="M1670.41 235.45A17.1 17.1 0 0 1 1670.83 236.94L1662.37 238.95A8.4 8.4 0 0 0 1662.16 238.22Z" fill="#c3ff00"/><path d="M1670.75 236.59A17.1 17.1 0 0 1 1671.07 238.11L1662.49 239.53A8.4 8.4 0 0 0 1662.33 238.78Z" fill="#b2ff00"/><path d="M1671.01 237.75A17.1 17.1 0 0 1 1671.22 239.29L1662.56 240.11A8.4 8.4 0 0 0 1662.46 239.35Z" fill="#a1ff00"/><path d="M1671.19 238.93A17.1 17.1 0 0 1 1671.29 240.48L1662.60 240.69A8.4 8.4 0 0 0 1662.54 239.93Z" fill="#90ff00"/><path d="M1671.28 240.12A17.1 17.1 0 0 1 1671.28 241.68L1662.59 241.28A8.4 8.4 0 0 0 1662.59 240.52Z" fill="#7fff00"/><path d="M1671.29 241.32A17.1 17.1 0 0 1 1671.19 242.87L1662.54 241.87A8.4 8.4 0 0 0 1662.60 241.11Z" fill="#6eff00"/><path d="M1671.22 242.51A17.1 17.1 0 0 1 1671.01 244.05L1662.46 242.45A8.4 8.4 0 0 0 1662.56 241.69Z" fill="#5dff00"/><path d="M1671.07 243.69A17.1 17.1 0 0 1 1670.75 245.21L1662.33 243.02A8.4 8.4 0 0 0 1662.49 242.27Z" fill="#4cff00"/><path d="M1670.83 244.86A17.1 17.1 0 0 1 1670.41 246.35L1662.16 243.58A8.4 8.4 0 0 0 1662.37 242.85Z" fill="#3bff00"/><path d="M1670.52 246.01A17.1 17.1 0 0 1 1669.99 247.47L1661.95 244.13A8.4 8.4 0 0 0 1662.22 243.41Z" fill="#2aff00"/><path d="M1670.12 247.14A17.1 17.1 0 0 1 1669.49 248.56L1661.71 244.66A8.4 8.4 0 0 0 1662.02 243.96Z" fill="#19ff00"/><path d="M1669.65 248.23A17.1 17.1 0 0 1 1668.92 249.60L1661.43 245.18A8.4 8.4 0 0 0 1661.79 244.50Z" fill="#08ff00"/><path d="M1669.10 249.29A17.1 17.1 0 0 1 1668.28 250.61L1661.11 245.67A8.4 8.4 0 0 0 1661.52 245.02Z" fill="#00ff08"/><path d="M1668.48 250.31A17.1 17.1 0 0 1 1667.56 251.57L1660.76 246.14A8.4 8.4 0 0 0 1661.21 245.52Z" fill="#00ff19"/><path d="M1667.78 251.29A17.1 17.1 0 0 1 1666.79 252.47L1660.38 246.59A8.4 8.4 0 0 0 1660.87 246.00Z" fill="#00ff2a"/><path d="M1667.03 252.21A17.1 17.1 0 0 1 1665.95 253.32L1659.97 247.00A8.4 8.4 0 0 0 1660.50 246.46Z" fill="#00ff3b"/><path d="M1666.21 253.08A17.1 17.1 0 0 1 1665.05 254.11L1659.53 247.39A8.4 8.4 0 0 0 1660.10 246.88Z" fill="#00ff4c"/><path d="M1665.33 253.88A17.1 17.1 0 0 1 1664.11 254.84L1659.07 247.75A8.4 8.4 0 0 0 1659.67 247.28Z" fill="#00ff5d"/><path d="M1664.40 254.63A17.1 17.1 0 0 1 1663.11 255.50L1658.58 248.07A8.4 8.4 0 0 0 1659.21 247.64Z" fill="#00ff6e"/><path d="M1663.41 255.31A17.1 17.1 0 0 1 1662.07 256.08L1658.07 248.36A8.4 8.4 0 0 0 1658.73 247.98Z" fill="#00ff7f"/><path d="M1662.39 255.91A17.1 17.1 0 0 1 1660.99 256.59L1657.54 248.61A8.4 8.4 0 0 0 1658.22 248.28Z" fill="#00ff90"/><path d="M1661.32 256.45A17.1 17.1 0 0 1 1659.88 257.03L1656.99 248.82A8.4 8.4 0 0 0 1657.70 248.54Z" fill="#00ffa1"/><path d="M1660.22 256.91A17.1 17.1 0 0 1 1658.74 257.39L1656.43 249.00A8.4 8.4 0 0 0 1657.16 248.76Z" fill="#00ffb2"/><path d="M1659.09 257.29A17.1 17.1 0 0 1 1657.58 257.66L1655.86 249.13A8.4 8.4 0 0 0 1656.60 248.95Z" fill="#00ffc3"/><path d="M1657.93 257.59A17.1 17.1 0 0 1 1656.40 257.86L1655.28 249.23A8.4 8.4 0 0 0 1656.03 249.10Z" fill="#00ffd4"/><path d="M1656.76 257.81A17.1 17.1 0 0 1 1655.21 257.97L1654.70 249.29A8.4 8.4 0 0 0 1655.46 249.21Z" fill="#00ffe5"/><path d="M1655.57 257.94A17.1 17.1 0 0 1 1654.02 258.00L1654.11 249.30A8.4 8.4 0 0 0 1654.87 249.27Z" fill="#00fff6"/><path d="M1654.38 258.00A17.1 17.1 0 0 1 1652.83 257.94L1653.53 249.27A8.4 8.4 0 0 0 1654.29 249.30Z" fill="#00f6ff"/><path d="M1653.19 257.97A17.1 17.1 0 0 1 1651.64 257.81L1652.94 249.21A8.4 8.4 0 0 0 1653.70 249.29Z" fill="#00e5ff"/><path d="M1652.00 257.86A17.1 17.1 0 0 1 1650.47 257.59L1652.37 249.10A8.4 8.4 0 0 0 1653.12 249.23Z" fill="#00d4ff"/><path d="M1650.82 257.66A17.1 17.1 0 0 1 1649.31 257.29L1651.80 248.95A8.4 8.4 0 0 0 1652.54 249.13Z" fill="#00c3ff"/><path d="M1649.66 257.39A17.1 17.1 0 0 1 1648.18 256.91L1651.24 248.76A8.4 8.4 0 0 0 1651.97 249.00Z" fill="#00b2ff"/><path d="M1648.52 257.03A17.1 17.1 0 0 1 1647.08 256.45L1650.70 248.54A8.4 8.4 0 0 0 1651.41 248.82Z" fill="#00a1ff"/><path d="M1647.41 256.59A17.1 17.1 0 0 1 1646.01 255.91L1650.18 248.28A8.4 8.4 0 0 0 1650.86 248.61Z" fill="#0090ff"/><path d="M1646.33 256.08A17.1 17.1 0 0 1 1644.99 255.31L1649.67 247.98A8.4 8.4 0 0 0 1650.33 248.36Z" fill="#007fff"/><path d="M1645.29 255.50A17.1 17.1 0 0 1 1644.00 254.63L1649.19 247.64A8.4 8.4 0 0 0 1649.82 248.07Z" fill="#006eff"/><path d="M1644.29 254.84A17.1 17.1 0 0 1 1643.07 253.88L1648.73 247.28A8.4 8.4 0 0 0 1649.33 247.75Z" fill="#005dff"/><path d="M1643.35 254.11A17.1 17.1 0 0 1 1642.19 253.08L1648.30 246.88A8.4 8.4 0 0 0 1648.87 247.39Z" fill="#004cff"/><path d="M1642.45 253.32A17.1 17.1 0 0 1 1641.37 252.21L1647.90 246.46A8.4 8.4 0 0 0 1648.43 247.00Z" fill="#003bff"/><path d="M1641.61 252.47A17.1 17.1 0 0 1 1640.62 251.29L1647.53 246.00A8.4 8.4 0 0 0 1648.02 246.59Z" fill="#002aff"/><path d="M1640.84 251.57A17.1 17.1 0 0 1 1639.92 250.31L1647.19 245.52A8.4 8.4 0 0 0 1647.64 246.14Z" fill="#0019ff"/><path d="M1640.12 250.61A17.1 17.1 0 0 1 1639.30 249.29L1646.88 245.02A8.4 8.4 0 0 0 1647.29 245.67Z" fill="#0008ff"/><path d="M1639.48 249.60A17.1 17.1 0 0 1 1638.75 248.23L1646.61 244.50A8.4 8.4 0 0 0 1646.97 245.18Z" fill="#0800ff"/><path d="M1638.91 248.56A17.1 17.1 0 0 1 1638.28 247.14L1646.38 243.96A8.4 8.4 0 0 0 1646.69 244.66Z" fill="#1900ff"/><path d="M1638.41 247.47A17.1 17.1 0 0 1 1637.88 246.01L1646.18 243.41A8.4 8.4 0 0 0 1646.45 244.13Z" fill="#2a00ff"/><path d="M1637.99 246.35A17.1 17.1 0 0 1 1637.57 244.86L1646.03 242.85A8.4 8.4 0 0 0 1646.24 243.58Z" fill="#3b00ff"/><path d="M1637.65 245.21A17.1 17.1 0 0 1 1637.33 243.69L1645.91 242.27A8.4 8.4 0 0 0 1646.07 243.02Z" fill="#4c00ff"/><path d="M1637.39 244.05A17.1 17.1 0 0 1 1637.18 242.51L1645.84 241.69A8.4 8.4 0 0 0 1645.94 242.45Z" fill="#5d00ff"/><path d="M1637.21 242.87A17.1 17.1 0 0 1 1637.11 241.32L1645.80 241.11A8.4 8.4 0 0 0 1645.86 241.87Z" fill="#6e00ff"/><path d="M1637.12 241.68A17.1 17.1 0 0 1 1637.12 240.12L1645.81 240.52A8.4 8.4 0 0 0 1645.81 241.28Z" fill="#7f00ff"/><path d="M1637.11 240.48A17.1 17.1 0 0 1 1637.21 238.93L1645.86 239.93A8.4 8.4 0 0 0 1645.80 240.69Z" fill="#9000ff"/><path d="M1637.18 239.29A17.1 17.1 0 0 1 1637.39 237.75L1645.94 239.35A8.4 8.4 0 0 0 1645.84 240.11Z" fill="#a100ff"/><path d="M1637.33 238.11A17.1 17.1 0 0 1 1637.65 236.59L1646.07 238.78A8.4 8.4 0 0 0 1645.91 239.53Z" fill="#b200ff"/><path d="M1637.57 236.94A17.1 17.1 0 0 1 1637.99 235.45L1646.24 238.22A8.4 8.4 0 0 0 1646.03 238.95Z" fill="#c300ff"/><path d="M1637.88 235.79A17.1 17.1 0 0 1 1638.41 234.33L1646.45 237.67A8.4 8.4 0 0 0 1646.18 238.39Z" fill="#d400ff"/><path d="M1638.28 234.66A17.1 17.1 0 0 1 1638.91 233.24L1646.69 237.14A8.4 8.4 0 0 0 1646.38 237.84Z" fill="#e500ff"/><path d="M1638.75 233.57A17.1 17.1 0 0 1 1639.48 232.20L1646.97 236.62A8.4 8.4 0 0 0 1646.61 237.30Z" fill="#f600ff"/><path d="M1639.30 232.51A17.1 17.1 0 0 1 1640.12 231.19L1647.29 236.13A8.4 8.4 0 0 0 1646.88 236.78Z" fill="#ff00f6"/><path d="M1639.92 231.49A17.1 17.1 0 0 1 1640.84 230.23L1647.64 235.66A8.4 8.4 0 0 0 1647.19 236.28Z" fill="#ff00e5"/><path d="M1640.62 230.51A17.1 17.1 0 0 1 1641.61 229.33L1648.02 235.21A8.4 8.4 0 0 0 1647.53 235.80Z" fill="#ff00d4"/><path d="M1641.37 229.59A17.1 17.1 0 0 1 1642.45 228.48L1648.43 234.80A8.4 8.4 0 0 0 1647.90 235.34Z" fill="#ff00c3"/><path d="M1642.19 228.72A17.1 17.1 0 0 1 1643.35 227.69L1648.87 234.41A8.4 8.4 0 0 0 1648.30 234.92Z" fill="#ff00b2"/><path d="M1643.07 227.92A17.1 17.1 0 0 1 1644.29 226.96L1649.33 234.05A8.4 8.4 0 0 0 1648.73 234.52Z" fill="#ff00a1"/><path d="M1644.00 227.17A17.1 17.1 0 0 1 1645.29 226.30L1649.82 233.73A8.4 8.4 0 0 0 1649.19 234.16Z" fill="#ff0090"/><path d="M1644.99 226.49A17.1 17.1 0 0 1 1646.33 225.72L1650.33 233.44A8.4 8.4 0 0 0 1649.67 233.82Z" fill="#ff007f"/><path d="M1646.01 225.89A17.1 17.1 0 0 1 1647.41 225.21L1650.86 233.19A8.4 8.4 0 0 0 1650.18 233.52Z" fill="#ff006e"/><path d="M1647.08 225.35A17.1 17.1 0 0 1 1648.52 224.77L1651.41 232.98A8.4 8.4 0 0 0 1650.70 233.26Z" fill="#ff005d"/><path d="M1648.18 224.89A17.1 17.1 0 0 1 1649.66 224.41L1651.97 232.80A8.4 8.4 0 0 0 1651.24 233.04Z" fill="#ff004c"/><path d="M1649.31 224.51A17.1 17.1 0 0 1 1650.82 224.14L1652.54 232.67A8.4 8.4 0 0 0 1651.80 232.85Z" fill="#ff003b"/><path d="M1650.47 224.21A17.1 17.1 0 0 1 1652.00 223.94L1653.12 232.57A8.4 8.4 0 0 0 1652.37 232.70Z" fill="#ff002a"/><path d="M1651.64 223.99A17.1 17.1 0 0 1 1653.19 223.83L1653.70 232.51A8.4 8.4 0 0 0 1652.94 232.59Z" fill="#ff0019"/><path d="M1652.83 223.86A17.1 17.1 0 0 1 1654.38 223.80L1654.29 232.50A8.4 8.4 0 0 0 1653.53 232.53Z" fill="#ff0008"/><circle cx="1654.2" cy="240.9" r="8.4" fill="#e3e3e3" stroke="#333" stroke-width="0.9"/><circle cx="1654.2" cy="240.9" r="16.8" fill="none" stroke="#111" stroke-width="1.6"/>
<defs><clipPath id="hclip"><rect x="1687.2" y="224.9" width="21.3" height="19.5" rx="2"/><circle cx="1709.5" cy="245.6" r="12.6"/></clipPath></defs>
<g fill="none" stroke="#1a1a1a" stroke-width="2.2">
<rect x="1687.2" y="224.9" width="21.3" height="19.5" rx="2"/>
<circle cx="1709.5" cy="245.6" r="12.6"/>
</g>
<g fill="#a9cbe8"><rect x="1687.2" y="224.9" width="21.3" height="19.5" rx="2"/><circle cx="1709.5" cy="245.6" r="12.6"/></g>
<g clip-path="url(#hclip)"><path d="M1624.2 262L1664.2 222M1628.9 262L1668.9 222M1633.6 262L1673.6 222M1638.3 262L1678.3 222M1643.0 262L1683.0 222M1647.7 262L1687.7 222M1652.4 262L1692.4 222M1657.1 262L1697.1 222M1661.8 262L1701.8 222M1666.5 262L1706.5 222M1671.2 262L1711.2 222M1675.9 262L1715.9 222M1680.6 262L1720.6 222M1685.3 262L1725.3 222M1690.0 262L1730.0 222M1694.7 262L1734.7 222M1699.4 262L1739.4 222M1704.1 262L1744.1 222M1708.8 262L1748.8 222M1713.5 262L1753.5 222M1718.2 262L1758.2 222M1722.9 262L1762.9 222M1727.6 262L1767.6 222M1732.3 262L1772.3 222M1737.0 262L1777.0 222M1741.7 262L1781.7 222M1746.4 262L1786.4 222M1751.1 262L1791.1 222M1755.8 262L1795.8 222M1760.5 262L1800.5 222" stroke="#1a1a1a" stroke-width="1.45"/></g>
<g>
<defs><linearGradient id="cylg" x1="0" x2="1" y1="0" y2="0"><stop offset="0" stop-color="#a9b6ff"/><stop offset="0.35" stop-color="#6f86f0"/><stop offset="1" stop-color="#16287a"/></linearGradient></defs>
<path d="M1747.3 233 L1747.3 252.6 A13.2 5.4 0 0 0 1773.7 252.6 L1773.7 233 Z" fill="url(#cylg)" stroke="#0d0d0d" stroke-width="1.8"/>
<ellipse cx="1760.5" cy="233" rx="13.2" ry="5.4" fill="#b6c0f6" stroke="#0d0d0d" stroke-width="1.8"/>
<path d="M1740.9 224.9H1756.9M1740.9 228H1756.9M1740.9 231.2H1756.9M1740.9 234.3H1756.9M1740.9 237.5H1756.9" stroke="#222" stroke-width="1.5"/>
<path d="M1737.2 224.9H1738.6M1737.2 228H1738.6M1737.2 231.2H1738.6M1737.2 234.3H1738.6M1737.2 237.5H1738.6" stroke="#333" stroke-width="1.4"/>
</g>
<text x="1632" y="294.5" font-family='"Liberation Sans", sans-serif' font-size="20.1" fill="#1b1b1b">Hatch</text>
<path d="M1692 286.1H2667.6" stroke="#c9c9c9" stroke-width="1.2"/>
<text x="1652" y="329.6" font-family='"Liberation Sans", sans-serif' font-size="19.9" fill="#1b1b1b">Pattern rotation:</text>
<text x="1652" y="365.7" font-family='"Liberation Sans", sans-serif' font-size="19" fill="#1b1b1b">Pattern scale:</text>
<rect x="1858.5" y="300.3" width="146" height="39.2" fill="#fff" stroke="#7a7a7a" stroke-width="1"/>
<rect x="1858.5" y="344.5" width="146" height="39.2" fill="#fff" stroke="#7a7a7a" stroke-width="1"/>
<text x="1867.6" y="323" font-family='"Liberation Sans", sans-serif' font-size="18.5" fill="#1b1b1b">0.0</text>
<text x="1867.6" y="366.9" font-family='"Liberation Sans", sans-serif' font-size="18.5" fill="#1b1b1b">6.0</text>
<rect x="1654.6" y="393.6" width="141.2" height="34.6" fill="#e1e1e1" stroke="#0078d7" stroke-width="3"/>
<text x="1697.8" y="417" font-family='"Liberation Sans", sans-serif' font-size="20" fill="#1b1b1b">Match</text>
<rect x="1860.2" y="392.9" width="143" height="36" fill="#e1e1e1" stroke="#adadad" stroke-width="1"/>
<text x="1888" y="417" font-family='"Liberation Sans", sans-serif' font-size="17.7" fill="#1b1b1b">Set Base...</text>
<rect x="1635.6" y="452.6" width="1029.2" height="992.2" fill="#fff" stroke="#979ca4" stroke-width="1.7"/>
<path d="M1773.3 455V492" stroke="#e5e5e5" stroke-width="1"/>
<text x="1648.8" y="480" font-family='"Liberation Sans", sans-serif' font-size="19.3" fill="#1b1b1b">Pattern</text>
<text x="1784.8" y="480" font-family='"Liberation Sans", sans-serif' font-size="19.1" fill="#1b1b1b">Preview</text>
<rect x="1646.3" y="829.4" width="125.3" height="67.5" fill="#f0f0f0"/>
<text x="1650.5" y="533.3" font-family='"Liberation Sans", sans-serif' font-size="19.5" fill="#1b1b1b">Solid</text>
<text x="1650.5" y="600" font-family='"Liberation Sans", sans-serif' font-size="19.4" fill="#1b1b1b">Hatch1</text>
<text x="1650.5" y="667.9" font-family='"Liberation Sans", sans-serif' font-size="19.4" fill="#1b1b1b">Hatch2</text>
<text x="1650.5" y="734.8" font-family='"Liberation Sans", sans-serif' font-size="19.6" fill="#1b1b1b">Hatch3</text>
<text x="1650.5" y="802.6" font-family='"Liberation Sans", sans-serif' font-size="19.2" fill="#1b1b1b">HatchDash</text>
<text x="1650.5" y="870.1" font-family='"Liberation Sans", sans-serif' font-size="19.2" fill="#1b1b1b">Grid</text>
<text x="1650.5" y="937" font-family='"Liberation Sans", sans-serif' font-size="18.8" fill="#1b1b1b">Grid60</text>
<text x="1650.5" y="1004.9" font-family='"Liberation Sans", sans-serif' font-size="19.2" fill="#1b1b1b">Plus</text>
<text x="1650.5" y="1072.4" font-family='"Liberation Sans", sans-serif' font-size="18.1" fill="#1b1b1b">Squares</text>
<rect x="1773.8" y="492.3" width="888.7" height="68.5" fill="#000"/>
<defs>
<clipPath id="pclip"><rect x="1774.5" y="560" width="886" height="538"/></clipPath>
</defs>
<g clip-path="url(#pclip)">
<path d="M1774.5 585.6H2661M1774.5 612.2H2661M1774.5 648.2H2661M1774.5 652.9H2661M1774.5 676.3H2661M1774.5 679.6H2661M1774.5 714.1H2661M1774.5 717.4H2661M1774.5 720.8H2661M1774.5 740.5H2661M1774.5 743.8H2661M1774.5 747.2H2661M1774.5 785.9H2661M1774.5 811.1H2661M1774.5 855.2H2661M1774.5 881.9H2661M1803.0 828.7V896M1831.9 828.7V896M1860.7 828.7V896M1889.6 828.7V896M1918.4 828.7V896M1947.3 828.7V896M1976.2 828.7V896M2005.0 828.7V896M2033.9 828.7V896M2062.8 828.7V896M2091.6 828.7V896M2120.5 828.7V896M2149.3 828.7V896M2178.2 828.7V896M2207.1 828.7V896M2235.9 828.7V896M2264.8 828.7V896M2293.7 828.7V896M2322.5 828.7V896M2351.4 828.7V896M2380.2 828.7V896M2409.1 828.7V896M2438.0 828.7V896M2466.8 828.7V896M2495.7 828.7V896M2524.6 828.7V896M2553.4 828.7V896M2582.3 828.7V896M2611.1 828.7V896M2640.0 828.7V896M1774.5 922.5H2661M1774.5 949.2H2661" stroke="#000" stroke-width="1.55" fill="none"/>
<path d="M1774.5 773.6h13.2M1801.3 773.6h13.2M1828.1 773.6h13.2M1854.9 773.6h13.2M1881.7 773.6h13.2M1908.5 773.6h13.2M1935.3 773.6h13.2M1962.1 773.6h13.2M1988.9 773.6h13.2M2015.7 773.6h13.2M2042.5 773.6h13.2M2069.3 773.6h13.2M2096.1 773.6h13.2M2122.9 773.6h13.2M2149.7 773.6h13.2M2176.5 773.6h13.2M2203.3 773.6h13.2M2230.1 773.6h13.2M2256.9 773.6h13.2M2283.7 773.6h13.2M2310.5 773.6h13.2M2337.3 773.6h13.2M2364.1 773.6h13.2M2390.9 773.6h13.2M2417.7 773.6h13.2M2444.5 773.6h13.2M2471.3 773.6h13.2M2498.1 773.6h13.2M2524.9 773.6h13.2M2551.7 773.6h13.2M2578.5 773.6h13.2M2605.3 773.6h13.2M2632.1 773.6h13.2M2658.9 773.6h13.2M1774.5 798.9h13.2M1801.3 798.9h13.2M1828.1 798.9h13.2M1854.9 798.9h13.2M1881.7 798.9h13.2M1908.5 798.9h13.2M1935.3 798.9h13.2M1962.1 798.9h13.2M1988.9 798.9h13.2M2015.7 798.9h13.2M2042.5 798.9h13.2M2069.3 798.9h13.2M2096.1 798.9h13.2M2122.9 798.9h13.2M2149.7 798.9h13.2M2176.5 798.9h13.2M2203.3 798.9h13.2M2230.1 798.9h13.2M2256.9 798.9h13.2M2283.7 798.9h13.2M2310.5 798.9h13.2M2337.3 798.9h13.2M2364.1 798.9h13.2M2390.9 798.9h13.2M2417.7 798.9h13.2M2444.5 798.9h13.2M2471.3 798.9h13.2M2498.1 798.9h13.2M2524.9 798.9h13.2M2551.7 798.9h13.2M2578.5 798.9h13.2M2605.3 798.9h13.2M2632.1 798.9h13.2M2658.9 798.9h13.2M1774.5 823.8h13.2M1801.3 823.8h13.2M1828.1 823.8h13.2M1854.9 823.8h13.2M1881.7 823.8h13.2M1908.5 823.8h13.2M1935.3 823.8h13.2M1962.1 823.8h13.2M1988.9 823.8h13.2M2015.7 823.8h13.2M2042.5 823.8h13.2M2069.3 823.8h13.2M2096.1 823.8h13.2M2122.9 823.8h13.2M2149.7 823.8h13.2M2176.5 823.8h13.2M2203.3 823.8h13.2M2230.1 823.8h13.2M2256.9 823.8h13.2M2283.7 823.8h13.2M2310.5 823.8h13.2M2337.3 823.8h13.2M2364.1 823.8h13.2M2390.9 823.8h13.2M2417.7 823.8h13.2M2444.5 823.8h13.2M2471.3 823.8h13.2M2498.1 823.8h13.2M2524.9 823.8h13.2M2551.7 823.8h13.2M2578.5 823.8h13.2M2605.3 823.8h13.2M2632.1 823.8h13.2M2658.9 823.8h13.2" stroke="#000" stroke-width="1.9" fill="none"/>
<path d="M1708.1 896L1667.7 966M1708.1 896L1748.5 966M1741.4 896L1701.0 966M1741.4 896L1781.8 966M1774.7 896L1734.3 966M1774.7 896L1815.1 966M1808.0 896L1767.6 966M1808.0 896L1848.4 966M1841.3 896L1800.9 966M1841.3 896L1881.7 966M1874.6 896L1834.2 966M1874.6 896L1915.0 966M1907.9 896L1867.5 966M1907.9 896L1948.3 966M1941.2 896L1900.8 966M1941.2 896L1981.7 966M1974.5 896L1934.1 966M1974.5 896L2015.0 966M2007.9 896L1967.4 966M2007.9 896L2048.3 966M2041.2 896L2000.8 966M2041.2 896L2081.6 966M2074.5 896L2034.1 966M2074.5 896L2114.9 966M2107.8 896L2067.4 966M2107.8 896L2148.2 966M2141.1 896L2100.7 966M2141.1 896L2181.5 966M2174.4 896L2134.0 966M2174.4 896L2214.8 966M2207.7 896L2167.3 966M2207.7 896L2248.1 966M2241.0 896L2200.6 966M2241.0 896L2281.4 966M2274.3 896L2233.9 966M2274.3 896L2314.8 966M2307.6 896L2267.2 966M2307.6 896L2348.1 966M2341.0 896L2300.5 966M2341.0 896L2381.4 966M2374.3 896L2333.9 966M2374.3 896L2414.7 966M2407.6 896L2367.2 966M2407.6 896L2448.0 966M2440.9 896L2400.5 966M2440.9 896L2481.3 966M2474.2 896L2433.8 966M2474.2 896L2514.6 966M2507.5 896L2467.1 966M2507.5 896L2547.9 966M2540.8 896L2500.4 966M2540.8 896L2581.2 966M2574.1 896L2533.7 966M2574.1 896L2614.5 966M2607.4 896L2567.0 966M2607.4 896L2647.9 966M2640.7 896L2600.3 966M2640.7 896L2681.2 966M2674.1 896L2633.6 966M2674.1 896L2714.5 966" stroke="#000" stroke-width="1.45" fill="none"/>
<path d="M1771.0 987.4h7M1774.5 984.4v7M1796.1 987.4h7M1799.6 984.4v7M1821.1 987.4h7M1824.6 984.4v7M1846.2 987.4h7M1849.7 984.4v7M1871.2 987.4h7M1874.7 984.4v7M1896.3 987.4h7M1899.8 984.4v7M1921.3 987.4h7M1924.8 984.4v7M1946.4 987.4h7M1949.9 984.4v7M1971.4 987.4h7M1974.9 984.4v7M1996.5 987.4h7M2000.0 984.4v7M2021.5 987.4h7M2025.0 984.4v7M2046.6 987.4h7M2050.1 984.4v7M2071.6 987.4h7M2075.1 984.4v7M2096.7 987.4h7M2100.2 984.4v7M2121.8 987.4h7M2125.2 984.4v7M2146.8 987.4h7M2150.3 984.4v7M2171.9 987.4h7M2175.4 984.4v7M2196.9 987.4h7M2200.4 984.4v7M2222.0 987.4h7M2225.5 984.4v7M2247.0 987.4h7M2250.5 984.4v7M2272.1 987.4h7M2275.6 984.4v7M2297.1 987.4h7M2300.6 984.4v7M2322.2 987.4h7M2325.7 984.4v7M2347.2 987.4h7M2350.7 984.4v7M2372.3 987.4h7M2375.8 984.4v7M2397.3 987.4h7M2400.8 984.4v7M2422.4 987.4h7M2425.9 984.4v7M2447.4 987.4h7M2450.9 984.4v7M2472.5 987.4h7M2476.0 984.4v7M2497.5 987.4h7M2501.0 984.4v7M2522.6 987.4h7M2526.1 984.4v7M2547.6 987.4h7M2551.1 984.4v7M2572.7 987.4h7M2576.2 984.4v7M2597.7 987.4h7M2601.2 984.4v7M2622.8 987.4h7M2626.3 984.4v7M2647.8 987.4h7M2651.3 984.4v7M1771.0 1010.8h7M1774.5 1007.8v7M1796.1 1010.8h7M1799.6 1007.8v7M1821.1 1010.8h7M1824.6 1007.8v7M1846.2 1010.8h7M1849.7 1007.8v7M1871.2 1010.8h7M1874.7 1007.8v7M1896.3 1010.8h7M1899.8 1007.8v7M1921.3 1010.8h7M1924.8 1007.8v7M1946.4 1010.8h7M1949.9 1007.8v7M1971.4 1010.8h7M1974.9 1007.8v7M1996.5 1010.8h7M2000.0 1007.8v7M2021.5 1010.8h7M2025.0 1007.8v7M2046.6 1010.8h7M2050.1 1007.8v7M2071.6 1010.8h7M2075.1 1007.8v7M2096.7 1010.8h7M2100.2 1007.8v7M2121.8 1010.8h7M2125.2 1007.8v7M2146.8 1010.8h7M2150.3 1007.8v7M2171.9 1010.8h7M2175.4 1007.8v7M2196.9 1010.8h7M2200.4 1007.8v7M2222.0 1010.8h7M2225.5 1007.8v7M2247.0 1010.8h7M2250.5 1007.8v7M2272.1 1010.8h7M2275.6 1007.8v7M2297.1 1010.8h7M2300.6 1007.8v7M2322.2 1010.8h7M2325.7 1007.8v7M2347.2 1010.8h7M2350.7 1007.8v7M2372.3 1010.8h7M2375.8 1007.8v7M2397.3 1010.8h7M2400.8 1007.8v7M2422.4 1010.8h7M2425.9 1007.8v7M2447.4 1010.8h7M2450.9 1007.8v7M2472.5 1010.8h7M2476.0 1007.8v7M2497.5 1010.8h7M2501.0 1007.8v7M2522.6 1010.8h7M2526.1 1007.8v7M2547.6 1010.8h7M2551.1 1007.8v7M2572.7 1010.8h7M2576.2 1007.8v7M2597.7 1010.8h7M2601.2 1007.8v7M2622.8 1010.8h7M2626.3 1007.8v7M2647.8 1010.8h7M2651.3 1007.8v7" stroke="#000" stroke-width="1.3" fill="none"/>
<path d="M1773.5 1051.3h23.5v20.4h-23.5zM1773.5 1097V1093.8h23.5V1097M1817.9 1051.3h23.5v20.4h-23.5zM1817.9 1097V1093.8h23.5V1097M1862.3 1051.3h23.5v20.4h-23.5zM1862.3 1097V1093.8h23.5V1097M1906.8 1051.3h23.5v20.4h-23.5zM1906.8 1097V1093.8h23.5V1097M1951.2 1051.3h23.5v20.4h-23.5zM1951.2 1097V1093.8h23.5V1097M1995.6 1051.3h23.5v20.4h-23.5zM1995.6 1097V1093.8h23.5V1097M2040.1 1051.3h23.5v20.4h-23.5zM2040.1 1097V1093.8h23.5V1097M2084.5 1051.3h23.5v20.4h-23.5zM2084.5 1097V1093.8h23.5V1097M2128.9 1051.3h23.5v20.4h-23.5zM2128.9 1097V1093.8h23.5V1097M2173.3 1051.3h23.5v20.4h-23.5zM2173.3 1097V1093.8h23.5V1097M2217.8 1051.3h23.5v20.4h-23.5zM2217.8 1097V1093.8h23.5V1097M2262.2 1051.3h23.5v20.4h-23.5zM2262.2 1097V1093.8h23.5V1097M2306.6 1051.3h23.5v20.4h-23.5zM2306.6 1097V1093.8h23.5V1097M2351.1 1051.3h23.5v20.4h-23.5zM2351.1 1097V1093.8h23.5V1097M2395.5 1051.3h23.5v20.4h-23.5zM2395.5 1097V1093.8h23.5V1097M2439.9 1051.3h23.5v20.4h-23.5zM2439.9 1097V1093.8h23.5V1097M2484.3 1051.3h23.5v20.4h-23.5zM2484.3 1097V1093.8h23.5V1097M2528.8 1051.3h23.5v20.4h-23.5zM2528.8 1097V1093.8h23.5V1097M2573.2 1051.3h23.5v20.4h-23.5zM2573.2 1097V1093.8h23.5V1097M2617.6 1051.3h23.5v20.4h-23.5zM2617.6 1097V1093.8h23.5V1097" stroke="#000" stroke-width="1.3" fill="none"/>
</g>
<path d="M1773.8 626.3H2662.5M1773.8 693.6H2662.5M1773.8 761.4H2662.5M1773.8 828.7H2662.5M1773.8 896H2662.5M1773.8 963.6H2662.5M1773.8 1031.2H2662.5M1773.8 1097.7H2662.5" stroke="#000" stroke-width="4" fill="none"/>
<path d="M1774.8 560.8V1098M2661 560.8V1098" stroke="#000" stroke-width="2.1" fill="none"/>
</svg></body></html>
